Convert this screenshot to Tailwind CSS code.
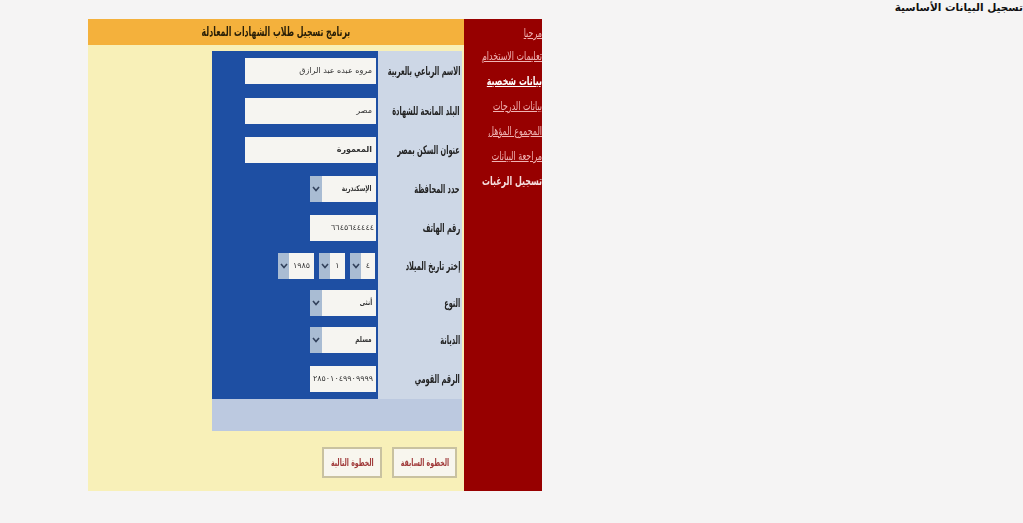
<!DOCTYPE html>
<html lang="ar" dir="ltr">
<head>
  <meta charset="UTF-8" />
  <meta name="viewport" content="width=device-width, initial-scale=1.0" />
  <title>تسجيل البيانات الأساسية</title>
  <script src="https://cdn.jsdelivr.net/npm/@tailwindcss/browser@4"></script>
</head>
<body class="bg-[#f5f4f4] font-['DejaVu_Sans',sans-serif] overflow-hidden">
<div class="flex h-[523px] w-[1023px] items-start">

  <!-- Main frame -->
  <div class="ml-[88px] mt-[19px] flex h-[472px] w-[454px] blur-[0.4px]">
    <div class="flex w-[376px] flex-col bg-[#f8f0b8]">
      <div class="flex h-[26px] items-center justify-center bg-[#f4b13c] text-[13px] font-bold whitespace-nowrap text-[#2a2008]" dir="rtl"><span class="scale-x-[.6]">برنامج تسجيل طلاب الشهادات المعادلة</span></div>

      <!-- Form panel -->
      <div class="ml-[124px] mt-[6px] w-[250px] bg-[#cdd7e6]">
        <div class="flex h-[40px]">
          <div class="flex w-[166px] shrink-0 items-center justify-end bg-[#1e4fa3] pr-[2px]"><div class="flex h-[26px] w-[131px] items-center justify-start bg-[#f6f5f1] pr-[4px] text-[8px] text-[#333]" dir="rtl">مروه عبده عبد الرازق</div></div>
          <div class="flex w-[84px] shrink-0 items-center justify-start overflow-hidden pr-[2px] text-[12px] font-bold whitespace-nowrap text-[#222]" dir="rtl"><span class="origin-right scale-x-[.55]">الاسم الرباعي بالعربية</span></div>
        </div>
        <div class="flex h-[40px]">
          <div class="flex w-[166px] shrink-0 items-center justify-end bg-[#1e4fa3] pr-[2px]"><div class="flex h-[26px] w-[131px] items-center justify-start bg-[#f6f5f1] pr-[4px] text-[8px] text-[#333]" dir="rtl">مصر</div></div>
          <div class="flex w-[84px] shrink-0 items-center justify-start overflow-hidden pr-[2px] text-[12px] font-bold whitespace-nowrap text-[#222]" dir="rtl"><span class="origin-right scale-x-[.55]">البلد المانحة للشهادة</span></div>
        </div>
        <div class="flex h-[38px]">
          <div class="flex w-[166px] shrink-0 items-center justify-end bg-[#1e4fa3] pr-[2px]"><div class="flex h-[26px] w-[131px] items-center justify-start bg-[#f6f5f1] pr-[4px] text-[8px] font-bold text-[#333]" dir="rtl">المعمورة</div></div>
          <div class="flex w-[84px] shrink-0 items-center justify-start overflow-hidden pr-[2px] text-[12px] font-bold whitespace-nowrap text-[#222]" dir="rtl"><span class="origin-right scale-x-[.55]">عنوان السكن بمصر</span></div>
        </div>
        <div class="flex h-[40px]">
          <div class="flex w-[166px] shrink-0 items-center justify-end bg-[#1e4fa3] pr-[2px]">
            <div class="flex h-[26px] w-[66px] items-stretch bg-[#f6f5f1]">
              <div class="flex w-[12px] items-center justify-center bg-[#a9bcd3]"><svg width="8" height="6" viewBox="0 0 8 6"><path d="M1 1l3 3.5L7 1" fill="none" stroke="#33425c" stroke-width="1.6"/></svg></div>
              <div class="flex flex-1 items-center justify-start pr-[4px] text-[8px] font-bold whitespace-nowrap text-[#333]" dir="rtl"><span class="origin-right scale-x-[.72]">الإسكندرية</span></div>
            </div>
          </div>
          <div class="flex w-[84px] shrink-0 items-center justify-start overflow-hidden pr-[2px] text-[12px] font-bold whitespace-nowrap text-[#222]" dir="rtl"><span class="origin-right scale-x-[.55]">حدد المحافظة</span></div>
        </div>
        <div class="flex h-[38px]">
          <div class="flex w-[166px] shrink-0 items-center justify-end bg-[#1e4fa3] pr-[2px]"><div class="flex h-[26px] w-[66px] items-center justify-start bg-[#f6f5f1] pr-[2px] text-[8px] text-[#333]" dir="rtl">٦٦٤٥٦٤٤٤٤٤</div></div>
          <div class="flex w-[84px] shrink-0 items-center justify-start overflow-hidden pr-[2px] text-[12px] font-bold whitespace-nowrap text-[#222]" dir="rtl"><span class="origin-right scale-x-[.55]">رقم الهاتف</span></div>
        </div>
        <div class="flex h-[38px]">
          <div class="flex w-[166px] shrink-0 items-center justify-end gap-[5px] bg-[#1e4fa3] pr-[3px]">
            <div class="flex h-[26px] w-[36px] items-stretch bg-[#f6f5f1]">
              <div class="flex w-[11px] items-center justify-center bg-[#a9bcd3]"><svg width="8" height="6" viewBox="0 0 8 6"><path d="M1 1l3 3.5L7 1" fill="none" stroke="#33425c" stroke-width="1.6"/></svg></div>
              <div class="flex flex-1 items-center justify-center text-[8px] text-[#333]">١٩٨٥</div>
            </div>
            <div class="flex h-[26px] w-[26px] items-stretch bg-[#f6f5f1]">
              <div class="flex w-[11px] items-center justify-center bg-[#a9bcd3]"><svg width="8" height="6" viewBox="0 0 8 6"><path d="M1 1l3 3.5L7 1" fill="none" stroke="#33425c" stroke-width="1.6"/></svg></div>
              <div class="flex flex-1 items-center justify-center text-[8px] text-[#333]">١</div>
            </div>
            <div class="flex h-[26px] w-[25px] items-stretch bg-[#f6f5f1]">
              <div class="flex w-[11px] items-center justify-center bg-[#a9bcd3]"><svg width="8" height="6" viewBox="0 0 8 6"><path d="M1 1l3 3.5L7 1" fill="none" stroke="#33425c" stroke-width="1.6"/></svg></div>
              <div class="flex flex-1 items-center justify-center text-[8px] text-[#333]">٤</div>
            </div>
          </div>
          <div class="flex w-[84px] shrink-0 items-center justify-start overflow-hidden pr-[2px] text-[12px] font-bold whitespace-nowrap text-[#222]" dir="rtl"><span class="origin-right scale-x-[.55]">إختر تاريخ الميلاد</span></div>
        </div>
        <div class="flex h-[36px]">
          <div class="flex w-[166px] shrink-0 items-center justify-end bg-[#1e4fa3] pr-[2px]">
            <div class="flex h-[26px] w-[66px] items-stretch bg-[#f6f5f1]">
              <div class="flex w-[12px] items-center justify-center bg-[#a9bcd3]"><svg width="8" height="6" viewBox="0 0 8 6"><path d="M1 1l3 3.5L7 1" fill="none" stroke="#33425c" stroke-width="1.6"/></svg></div>
              <div class="flex flex-1 items-center justify-start pr-[4px] text-[8px] font-bold whitespace-nowrap text-[#333]" dir="rtl"><span class="origin-right scale-x-[.72]">أنثى</span></div>
            </div>
          </div>
          <div class="flex w-[84px] shrink-0 items-center justify-start overflow-hidden pr-[2px] text-[12px] font-bold whitespace-nowrap text-[#222]" dir="rtl"><span class="origin-right scale-x-[.55]">النوع</span></div>
        </div>
        <div class="flex h-[38px]">
          <div class="flex w-[166px] shrink-0 items-center justify-end bg-[#1e4fa3] pr-[2px]">
            <div class="flex h-[26px] w-[66px] items-stretch bg-[#f6f5f1]">
              <div class="flex w-[12px] items-center justify-center bg-[#a9bcd3]"><svg width="8" height="6" viewBox="0 0 8 6"><path d="M1 1l3 3.5L7 1" fill="none" stroke="#33425c" stroke-width="1.6"/></svg></div>
              <div class="flex flex-1 items-center justify-start pr-[4px] text-[8px] font-bold whitespace-nowrap text-[#333]" dir="rtl"><span class="origin-right scale-x-[.72]">مسلم</span></div>
            </div>
          </div>
          <div class="flex w-[84px] shrink-0 items-center justify-start overflow-hidden pr-[2px] text-[12px] font-bold whitespace-nowrap text-[#222]" dir="rtl"><span class="origin-right scale-x-[.55]">الديانة</span></div>
        </div>
        <div class="flex h-[40px]">
          <div class="flex w-[166px] shrink-0 items-center justify-end bg-[#1e4fa3] pr-[2px]"><div class="flex h-[26px] w-[66px] items-center justify-center overflow-hidden bg-[#f6f5f1] text-[8px] text-[#333]" dir="rtl">٢٨٥٠١٠٤٩٩٠٩٩٩٩</div></div>
          <div class="flex w-[84px] shrink-0 items-center justify-start overflow-hidden pr-[2px] text-[12px] font-bold whitespace-nowrap text-[#222]" dir="rtl"><span class="origin-right scale-x-[.55]">الرقم القومي</span></div>
        </div>
        <div class="h-[32px] bg-[#bcc9e0]"></div>
      </div>

      <!-- Buttons -->
      <div class="ml-[234px] mt-[16px] flex gap-[10px]">
        <div class="flex h-[31px] w-[60px] items-center justify-center border-2 border-[#c9c2a0] bg-[#f8f6ee] text-[10px] font-bold whitespace-nowrap text-[#a03a3a]" dir="rtl"><span class="scale-x-[.62]">الخطوة التالية</span></div>
        <div class="flex h-[31px] w-[65px] items-center justify-center border-2 border-[#c9c2a0] bg-[#f8f6ee] text-[10px] font-bold whitespace-nowrap text-[#a03a3a]" dir="rtl"><span class="scale-x-[.62]">الخطوة السابقة</span></div>
      </div>
    </div>

    <!-- Side nav -->
    <div class="flex w-[78px] flex-col items-end gap-[7px] overflow-hidden bg-[#970000] pt-[5px] text-[12px] whitespace-nowrap leading-[18px] text-[#f0b4b4]" dir="rtl">
      <a class="w-full origin-right scale-x-[.66] underline">مرحبا</a>
      <a class="-mt-[2px] w-full origin-right scale-x-[.66] underline">تعليمات الاستخدام</a>
      <a class="w-full origin-right scale-x-[.66] font-bold text-white underline">بيانات شخصية</a>
      <a class="w-full origin-right scale-x-[.66] underline">بيانات الدرجات</a>
      <a class="w-full origin-right scale-x-[.66] underline">المجموع المؤهل</a>
      <a class="w-full origin-right scale-x-[.66] underline">مراجعة البيانات</a>
      <a class="w-full origin-right scale-x-[.66] font-bold text-[#f5dede]">تسجيل الرغبات</a>
    </div>
  </div>

  <!-- Page title -->
  <div class="ml-auto text-[10.5px] font-bold whitespace-nowrap text-[#111]" dir="rtl">تسجيل البيانات الأساسية</div>
</div>
</body>
</html>
